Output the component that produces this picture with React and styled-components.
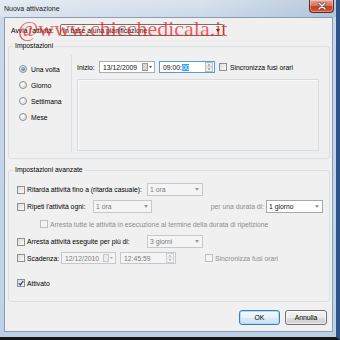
import React from "react";
import styled, { createGlobalStyle } from "styled-components";

const GlobalStyle = createGlobalStyle`
  html, body { margin: 0; padding: 0; }
  body { width: 340px; height: 340px; overflow: hidden; background: #1a1a1a; }
  * { box-sizing: border-box; }
`;

const UI_FONT = `"Liberation Sans", Arial, sans-serif`;

const Window = styled.div`
  position: relative;
  width: 340px;
  height: 340px;
  display: flex;
  flex-direction: column;
  background: linear-gradient(180deg, #d9e3ee 0px, #cad8e8 18px, #bcd1e8 100%);
  border-right: 4px solid #2c5488;
  border-bottom: 3px solid #151515;
  font-family: ${UI_FONT};
  font-size: 6.8px;
  color: #000;
  overflow: hidden;
`;

const TitleBar = styled.div`
  height: 17px;
  flex: none;
  display: flex;
  align-items: flex-start;
  padding-left: 4px;
  background: linear-gradient(90deg, rgba(255,255,255,0.3), rgba(255,255,255,0) 60%, rgba(110,140,180,0.28));
`;

const Title = styled.div`
  flex: 1;
  line-height: 17px;
  font-size: 7px;
  color: #1b1b1b;
`;

const CloseButton = styled.div`
  width: 25px;
  height: 13px;
  margin-right: 2px;
  display: flex;
  align-items: center;
  justify-content: center;
  border: 1px solid #5e2a22;
  border-top: none;
  border-radius: 0 0 4px 4px;
  background: linear-gradient(180deg, #e8a496 0%, #d9735f 45%, #c2401f 55%, #d45a3c 100%);
  box-shadow: inset 0 0 0 1px rgba(255, 255, 255, 0.35);
`;

const Frame = styled.div`
  flex: 1;
  min-height: 0;
  display: flex;
  padding: 0 3px 5px 4px;
`;

const Client = styled.div`
  flex: 1;
  min-width: 0;
  display: flex;
  flex-direction: column;
  background: #f0f0f0;
  border: 1px solid #8d9db1;
  padding: 6px 2px 0 3px;
`;

const TopRow = styled.div`
  display: flex;
  align-items: center;
  height: 12px;
  padding-left: 3px;
`;

const Label = styled.span`
  flex: none;
  width: ${(p) => (p.$w ? `${p.$w}px` : "auto")};
  margin-left: ${(p) => p.$ml || 0}px;
  text-align: ${(p) => (p.$right ? "right" : "left")};
  padding-right: ${(p) => (p.$right ? 2 : 0)}px;
  white-space: nowrap;
  color: ${(p) => (p.$disabled ? "#8c8c8c" : "#000")};
`;

const Combo = styled.div`
  flex: none;
  width: ${(p) => p.$w}px;
  height: ${(p) => p.$h || 13}px;
  display: flex;
  align-items: center;
  justify-content: space-between;
  padding: 0 3px 0 2px;
  border: 1px solid ${(p) => (p.$list ? "#707070" : p.$disabled ? "#c5c9cd" : "#a3a8ae")};
  border-radius: ${(p) => (p.$list ? 2 : 0)}px;
  background: ${(p) =>
    p.$list ? "linear-gradient(180deg, #f7f7f7, #e9e9e9)" : p.$disabled ? "#f4f4f4" : "#fff"};
  color: ${(p) => (p.$disabled ? "#7a7a7a" : "#111")};
  white-space: nowrap;
  overflow: hidden;
`;

const Arrow = styled.span`
  flex: none;
  width: 0;
  height: 0;
  border-left: 2.5px solid transparent;
  border-right: 2.5px solid transparent;
  border-top: 3px solid ${(p) => (p.$dim ? "#9a9a9a" : "#222")};
`;

const Group = styled.fieldset`
  margin: ${(p) => p.$mt || 0}px 0 0 0;
  padding: 0;
  min-width: 0;
  border: 1px solid #d5dfe5;
  border-radius: 3px;
`;

const Legend = styled.legend`
  margin-left: 4px;
  padding: 0 2px;
  line-height: 8px;
  color: #000;
`;

const ScheduleBody = styled.div`
  display: flex;
  padding: 5px 10px 6px 10px;
`;

const RadioColumn = styled.div`
  width: 52px;
  flex: none;
  display: flex;
  flex-direction: column;
  padding-top: 6px;
`;

const RadioRow = styled.div`
  height: 16px;
  display: flex;
  align-items: center;
  gap: 4px;
`;

const Radio = styled.span`
  flex: none;
  width: 8px;
  height: 8px;
  border-radius: 50%;
  border: 1px solid #8e8f8f;
  background: radial-gradient(circle at 35% 35%, #ffffff, #d6d6d6);
  display: flex;
  align-items: center;
  justify-content: center;
  &::after {
    content: "";
    display: ${(p) => (p.$checked ? "block" : "none")};
    width: 4px;
    height: 4px;
    border-radius: 50%;
    background: radial-gradient(circle at 35% 35%, #9ccaf2, #1d5ca9);
  }
`;

const DetailColumn = styled.div`
  flex: 1;
  min-width: 0;
  display: flex;
  flex-direction: column;
  border-left: 1px solid #d5dfe5;
  padding: 6px 0 1px 5px;
`;

const StartRow = styled.div`
  display: flex;
  align-items: center;
  height: 12px;
`;

const InnerPanel = styled.div`
  margin-top: 6px;
  height: 72px;
  border: 1px solid #d9dcdf;
  box-shadow: inset 1px 1px 0 #fafafa;
`;

const Field = styled.div`
  flex: none;
  width: ${(p) => p.$w}px;
  height: 12px;
  margin-left: ${(p) => p.$ml || 0}px;
  display: flex;
  align-items: center;
  padding: 0 1px 0 3px;
  border: 1px solid ${(p) => (p.$focused ? "#5a9ad6" : p.$disabled ? "#c5c9cd" : "#a9adb2")};
  background: ${(p) => (p.$disabled ? "#f4f4f4" : "#fff")};
  color: ${(p) => (p.$disabled ? "#7b7b7b" : "#111")};
  white-space: nowrap;
`;

const FieldText = styled.span`
  flex: 1;
`;

const Selected = styled.span`
  background: #3399ff;
  color: #fff;
`;

const CheckBox = styled.span`
  flex: none;
  width: 8px;
  height: 8px;
  margin-left: ${(p) => p.$ml || 0}px;
  display: flex;
  align-items: center;
  justify-content: center;
  border: 1px solid ${(p) => (p.$disabled ? "#c0c0c0" : "#8e8f8f")};
  background: ${(p) =>
    p.$disabled ? "#f4f4f4" : "linear-gradient(135deg, #dcdcdc, #fbfbfb)"};
`;

const AdvancedBody = styled.div`
  display: flex;
  flex-direction: column;
  padding: 7px 6px 10px 8px;
`;

const OptionRow = styled.div`
  display: flex;
  align-items: center;
  height: ${(p) => p.$h || 17}px;
  margin-top: ${(p) => p.$mt || 0}px;
  padding-left: ${(p) => p.$indent || 0}px;
`;

const ButtonBar = styled.div`
  display: flex;
  justify-content: flex-end;
  gap: 5px;
  margin-top: 8px;
  padding-right: 3px;
`;

const Button = styled.button`
  width: ${(p) => p.$w}px;
  height: 15px;
  padding: 0;
  font-family: ${UI_FONT};
  font-size: 6.8px;
  color: #000;
  border: 1px solid ${(p) => (p.$default ? "#3c7fb1" : "#707070")};
  border-radius: 3px;
  background: ${(p) =>
    p.$default
      ? "linear-gradient(180deg, #f3f8fc 0%, #e8f1f9 50%, #d9e8f4 51%, #cfe2f1 100%)"
      : "linear-gradient(180deg, #f2f2f2 0%, #ebebeb 50%, #dddddd 51%, #cfcfcf 100%)"};
  box-shadow: inset 0 0 0 1px ${(p) => (p.$default ? "#a9dcfb" : "rgba(255,255,255,0.6)")};
`;

const Watermark = styled.div`
  position: absolute;
  left: 18px;
  top: 18px;
  font-family: "Liberation Serif", "Times New Roman", serif;
  font-size: 22px;
  line-height: 22px;
  color: rgba(238, 30, 30, 0.72);
  white-space: nowrap;
  pointer-events: none;
`;

const CloseIcon = () => (
  <svg width="10" height="8" viewBox="0 0 10 8">
    <path d="M2 1 L8 7 M8 1 L2 7" stroke="#6a2a20" strokeWidth="2.6" strokeLinecap="round" />
    <path d="M2 1 L8 7 M8 1 L2 7" stroke="#ffffff" strokeWidth="1.5" strokeLinecap="round" />
  </svg>
);

const CalendarIcon = ({ dim }) => (
  <svg width="11" height="8" viewBox="0 0 11 8">
    <rect x="0.5" y="0.5" width="5" height="7" fill={dim ? "#ececec" : "#d6d6d6"} stroke={dim ? "#c4c4c4" : "#9a9a9a"} />
    <path d="M7 3 L10 3 L8.5 5 Z" fill={dim ? "#a5a5a5" : "#444"} />
  </svg>
);

const SpinIcon = ({ dim }) => (
  <svg width="8" height="10" viewBox="0 0 8 10">
    <rect x="0.5" y="0.5" width="7" height="9" fill={dim ? "#f2f2f2" : "#eef0f2"} stroke={dim ? "#cfd2d5" : "#b9bec4"} />
    <line x1="1" y1="5" x2="7" y2="5" stroke={dim ? "#d8d8d8" : "#c8ccd0"} />
    <path d="M2.5 3.5 L5.5 3.5 L4 2 Z" fill={dim ? "#a5a5a5" : "#7a7a7a"} />
    <path d="M2.5 6.5 L5.5 6.5 L4 8 Z" fill={dim ? "#a5a5a5" : "#7a7a7a"} />
  </svg>
);

const CheckMark = () => (
  <svg width="6" height="6" viewBox="0 0 6 6">
    <path d="M0.8 3.2 L2.4 4.9 L5.3 0.9" fill="none" stroke="#34488a" strokeWidth="1.3" />
  </svg>
);

const radios = [
  { label: "Una volta", checked: true },
  { label: "Giorno" },
  { label: "Settimana" },
  { label: "Mese" },
];

export default function App() {
  return (
    <>
      <GlobalStyle />
      <Window>
        <TitleBar>
          <Title>Nuova attivazione</Title>
          <CloseButton>
            <CloseIcon />
          </CloseButton>
        </TitleBar>
        <Frame>
          <Client>
            <TopRow>
              <Label $w={49}>Avvia l'attività:</Label>
              <Combo $w={164} $h={12} $list>
                <span>In base a una pianificazione</span>
                <Arrow />
              </Combo>
            </TopRow>

            <Group $mt={6}>
              <Legend>Impostazioni</Legend>
              <ScheduleBody>
                <RadioColumn>
                  {radios.map((r) => (
                    <RadioRow key={r.label}>
                      <Radio $checked={r.checked} />
                      <Label>{r.label}</Label>
                    </RadioRow>
                  ))}
                </RadioColumn>
                <DetailColumn>
                  <StartRow>
                    <Label $w={22}>Inizio:</Label>
                    <Field $w={56}>
                      <FieldText>13/12/2009</FieldText>
                      <CalendarIcon />
                    </Field>
                    <Field $w={56} $ml={4} $focused>
                      <FieldText>
                        09:00:<Selected>00</Selected>
                      </FieldText>
                      <SpinIcon />
                    </Field>
                    <CheckBox $ml={4} />
                    <Label $ml={3}>Sincronizza fusi orari</Label>
                  </StartRow>
                  <InnerPanel />
                </DetailColumn>
              </ScheduleBody>
            </Group>

            <Group $mt={7}>
              <Legend>Impostazioni avanzate</Legend>
              <AdvancedBody>
                <OptionRow>
                  <CheckBox />
                  <Label $ml={2} $w={120}>Ritarda attività fino a (ritarda casuale):</Label>
                  <Combo $w={56} $disabled>
                    <span>1 ora</span>
                    <Arrow $dim />
                  </Combo>
                </OptionRow>
                <OptionRow>
                  <CheckBox />
                  <Label $ml={2} $w={66}>Ripeti l'attività ogni:</Label>
                  <Combo $w={59} $disabled>
                    <span>1 ora</span>
                    <Arrow $dim />
                  </Combo>
                  <Label $w={114} $right $disabled>per una durata di:</Label>
                  <Combo $w={57}>
                    <span>1 giorno</span>
                    <Arrow $dim />
                  </Combo>
                </OptionRow>
                <OptionRow $h={18} $indent={23}>
                  <CheckBox $disabled />
                  <Label $ml={2} $disabled>
                    Arresta tutte le attività in esecuzione al termine della durata di ripetizione
                  </Label>
                </OptionRow>
                <OptionRow>
                  <CheckBox />
                  <Label $ml={2} $w={120}>Arresta attività eseguite per più di:</Label>
                  <Combo $w={56} $disabled>
                    <span>3 giorni</span>
                    <Arrow $dim />
                  </Combo>
                </OptionRow>
                <OptionRow $h={16}>
                  <CheckBox />
                  <Label $ml={2} $w={34}>Scadenza:</Label>
                  <Field $w={55} $disabled>
                    <FieldText>12/12/2010</FieldText>
                    <CalendarIcon dim />
                  </Field>
                  <Field $w={56} $ml={4} $disabled>
                    <FieldText>12:45:59</FieldText>
                    <SpinIcon dim />
                  </Field>
                  <CheckBox $ml={29} $disabled />
                  <Label $ml={2} $disabled>Sincronizza fusi orari</Label>
                </OptionRow>
                <OptionRow $h={16} $mt={9}>
                  <CheckBox>
                    <CheckMark />
                  </CheckBox>
                  <Label $ml={2}>Attivato</Label>
                </OptionRow>
              </AdvancedBody>
            </Group>

            <ButtonBar>
              <Button $w={41} $default>OK</Button>
              <Button $w={42}>Annulla</Button>
            </ButtonBar>
          </Client>
        </Frame>
        <Watermark>@www.chicchedicala.it</Watermark>
      </Window>
    </>
  );
}
